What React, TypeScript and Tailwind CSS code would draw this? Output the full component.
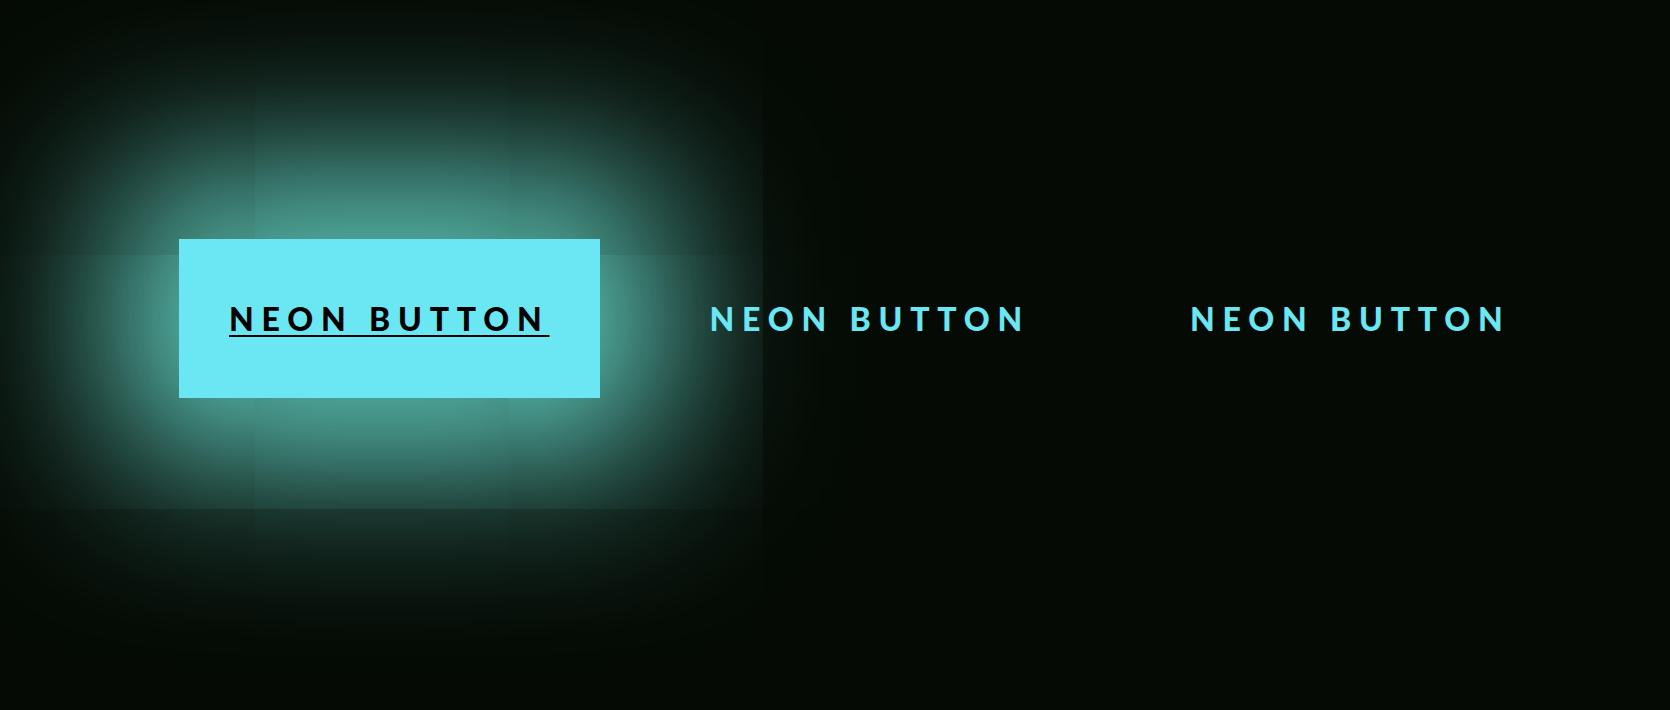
import React from "react";

export default function App() {
  const text = "NEON BUTTON";
  return (
    <div className="w-[1670px] h-[710px] bg-[#050a04] overflow-hidden font-['Lato',_'Liberation_Sans',_sans-serif]">
      <div className="flex gap-[60px] pl-[179px] pt-[239px]">
        <a
          href="#"
          className="block px-[50px] py-[50px] bg-[#6ae7f2] text-black text-[32px] leading-[59px] font-black tracking-[7.8px] underline decoration-2 underline-offset-[4px] shadow-[0_0_180px_60px_rgba(108,226,212,1)]"
        >
          {text}
        </a>
        <a
          href="#"
          className="block px-[50px] py-[50px] text-[#6ae7f2] text-[32px] leading-[59px] font-black tracking-[7.8px] no-underline"
        >
          {text}
        </a>
        <a
          href="#"
          className="block px-[50px] py-[50px] text-[#6ae7f2] text-[32px] leading-[59px] font-black tracking-[7.8px] no-underline"
        >
          {text}
        </a>
      </div>
    </div>
  );
}
